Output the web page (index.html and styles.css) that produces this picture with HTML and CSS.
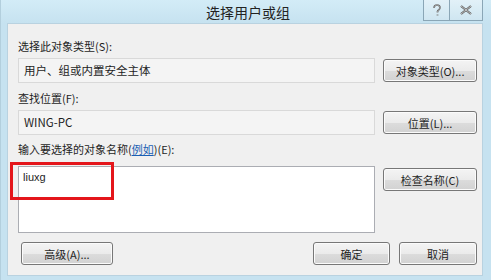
FILE: index.html
```html
<!DOCTYPE html>
<html lang="zh-CN">
<head>
    <meta charset="UTF-8">
    <title>选择用户或组</title>
    <link rel="stylesheet" href="styles.css">
</head>
<body>
    <div class="window">
        <div class="titlebar">
            <span class="title">选择用户或组</span>
            <div class="caption">
                <div class="cap help">
                    <svg width="10" height="13" viewBox="0 0 10 13"><path d="M2 4 C2 1.5 3.5 1 5 1 C7 1 8 2.2 8 3.8 C8 5.5 6 6 5.5 7.5 L5.5 8.5 M5.5 10.5 L5.5 11.5" fill="none" stroke="#555" stroke-width="1.6"/><path d="M2 4 C2 1.5 3.5 1 5 1 C7 1 8 2.2 8 3.8 C8 5.5 6 6 5.5 7.5 L5.5 8.5 M5.5 10.5 L5.5 11.5" fill="none" stroke="#f4f4f4" stroke-width="0.5"/></svg>
                </div>
                <div class="cap close">
                    <svg width="12" height="10" viewBox="0 0 12 10"><path d="M1 1 L11 9 M11 1 L1 9" fill="none" stroke="#555" stroke-width="2.2"/><path d="M1 1 L11 9 M11 1 L1 9" fill="none" stroke="#f0f0f0" stroke-width="0.7"/></svg>
                </div>
            </div>
        </div>

        <div class="content">
            <div class="lbl">选择此对象类型(S):</div>
            <div class="row">
                <div class="field">用户、组或内置安全主体</div>
                <button class="btn side">对象类型(O)...</button>
            </div>

            <div class="lbl">查找位置(F):</div>
            <div class="row">
                <div class="field">WING-PC</div>
                <button class="btn side">位置(L)...</button>
            </div>

            <div class="lbl">输入要选择的对象名称(<a href="#">例如</a>)(E):</div>
            <div class="row names">
                <div class="area">
                    liuxg
                    <span class="mark"></span>
                </div>
                <button class="btn side">检查名称(C)</button>
            </div>

            <div class="footer">
                <button class="btn adv">高级(A)...</button>
                <div class="actions">
                    <button class="btn ok">确定</button>
                    <button class="btn cancel">取消</button>
                </div>
            </div>
        </div>
    </div>
</body>
</html>
```

FILE: styles.css
```css
body{
    margin: 0;
    width: 491px;
    height: 280px;
    overflow: hidden;
    font-family: "Noto Sans CJK SC", "Liberation Sans", sans-serif;
    font-size: 11px;
    color: #1e1e1e;
}
.window{
    width: 491px;
    height: 280px;
    background-color: #c6e2f0;
    display: flex;
    flex-direction: column;
    box-sizing: border-box;
    border-left: 1px solid #b3cfdd;
}
.titlebar{
    height: 23px;
    position: relative;
    display: flex;
    justify-content: center;
    align-items: center;
    background: linear-gradient(#d3ecf7, #c6e2f0);
}
.title{
    font-size: 14px;
    color: #222;
    margin-left: 4px;
}
.caption{
    position: absolute;
    top: 0;
    right: 8px;
    display: flex;
}
.cap{
    height: 20px;
    display: flex;
    align-items: center;
    justify-content: center;
    border: 1px solid #8aa6b6;
    border-top: none;
    background: linear-gradient(#e2f1f8, #cfe6f1);
}
.help{
    width: 25px;
    border-right: none;
}
.close{
    width: 32px;
}
.content{
    flex: 1;
    margin: 0 8px 4px 6px;
    background-color: #f0f0f0;
    border: 1px solid #b9d2e0;
    padding: 14px 5px 0 10px;
    display: flex;
    flex-direction: column;
}
.lbl{
    height: 16px;
    line-height: 16px;
    margin-bottom: 4px;
}
.lbl a{
    color: #1a5fb4;
    text-decoration: underline;
}
.row{
    display: flex;
    align-items: center;
    gap: 8px;
    margin-bottom: 7px;
}
.row + .lbl + .row{
    margin-bottom: 6px;
}
.field{
    width: 358px;
    height: 25px;
    box-sizing: border-box;
    border: 1px solid #d9d9d9;
    background-color: #f4f4f4;
    padding-left: 5px;
    line-height: 23px;
    font-size: 11.5px;
}
.btn{
    font-family: inherit;
    font-size: 11px;
    color: #1e1e1e;
    height: 23px;
    padding: 0;
    border: 1px solid #777;
    border-radius: 3px;
    background: linear-gradient(#f4f4f4 0%, #ebebeb 50%, #dcdcdc 51%, #d2d2d2 100%);
    box-shadow: inset 0 0 0 1px #fbfbfb;
}
.side{
    width: 94px;
}
.names{
    align-items: flex-start;
    margin-top: 5px;
}
.names .side{
    margin-top: 2px;
}
.area{
    position: relative;
    width: 358px;
    height: 67px;
    box-sizing: border-box;
    border: 1px solid #abadb3;
    background-color: #fff;
    padding: 4px 4px;
    font-family: "Liberation Sans", sans-serif;
    font-size: 11px;
}
.mark{
    position: absolute;
    left: -9px;
    top: -5px;
    width: 98px;
    height: 32px;
    border: 3px solid #e4161b;
}
.footer{
    display: flex;
    justify-content: space-between;
    margin-top: 3px;
    padding-left: 3px;
}
.adv{
    width: 92px;
}
.actions{
    display: flex;
    gap: 9px;
}
.ok{
    width: 77px;
}
.cancel{
    width: 78px;
}
```
